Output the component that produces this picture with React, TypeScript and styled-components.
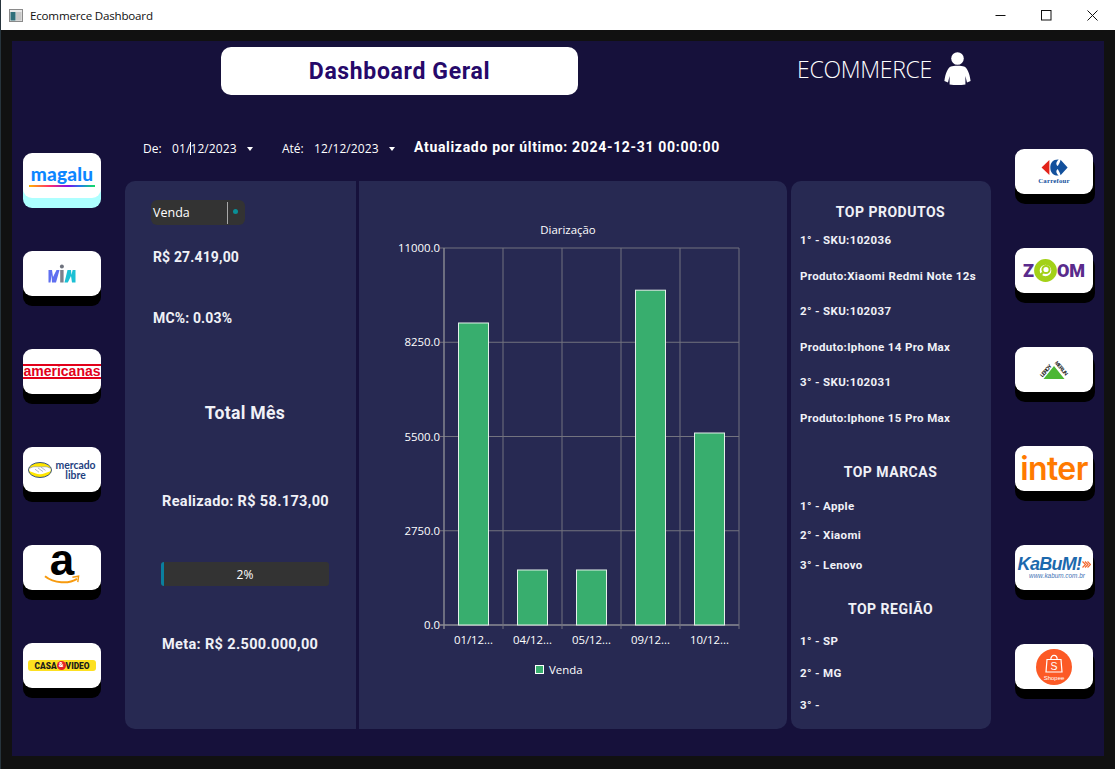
import React from 'react'
import styled, {createGlobalStyle} from 'styled-components'

const din = `Roboto, "Noto Sans", sans-serif`
const segoe = `"Open Sans", "Noto Sans", sans-serif`

const GlobalStyle = createGlobalStyle`
  html, body {
    margin: 0;
    padding: 0;
    background: #111111;
    overflow: hidden;
  }
`

const chartData = [
    {label: '01/12...', value: 8812},
    {label: '04/12...', value: 1605},
    {label: '05/12...', value: 1605},
    {label: '09/12...', value: 9769},
    {label: '10/12...', value: 5602},
]
const yTicks = [0, 2750, 5500, 8250, 11000]

const products = [
    '1° - SKU:102036', 'Produto:Xiaomi Redmi Note 12s',
    '2° - SKU:102037', 'Produto:Iphone 14 Pro Max',
    '3° - SKU:102031', 'Produto:Iphone 15 Pro Max',
]
const brands = ['1° - Apple', '2° - Xiaomi', '3° - Lenovo']
const regions = ['1° - SP', '2° - MG', '3° -']

function AppIcon() {
    return (
        <svg width="14" height="13" viewBox="0 0 14 13">
            <rect x="0.5" y="0.5" width="13" height="12" fill="#e8e8e8" stroke="#8a8a8a"/>
            <rect x="1.5" y="3" width="5" height="8.5" fill="#2f6f7a"/>
            <rect x="7" y="3" width="5.5" height="8.5" fill="#c8c8c8"/>
        </svg>
    )
}

function PersonIcon() {
    return (
        <svg width="27" height="33" viewBox="0 0 27 33">
            <circle cx="13.5" cy="6.5" r="6.3" fill="#fff"/>
            <path d="M7 14.5 C9 13.6 18 13.6 20 14.5 C23 15.6 25.6 21 26.6 29 L23 30.5 L21.4 24 L21.4 32.4 C16 33.2 11 33.2 5.6 32.4 L5.6 24 L4 30.5 L0.4 29 C1.4 21 4 15.6 7 14.5 Z" fill="#fff"/>
        </svg>
    )
}

function VinLogo() {
    return (
        <svg width="28" height="20" viewBox="0 0 28 20">
            <path d="M0.5 6 H4 L5 13 L8.5 6 H11.5 L8 18.5 H4 L3.6 11 L2.5 18.5 H0.5 Z" fill="#5f6ff0"/>
            <rect x="12.2" y="6" width="3.4" height="12.5" fill="#7c808c"/>
            <circle cx="13.9" cy="2.4" r="2" fill="#6e727e"/>
            <path d="M19.5 6 H23 L23.5 11 L24.6 6 H27.5 V18.5 H24 L23 12 L19.8 18.5 H16.5 Z" fill="#1cc0d4"/>
        </svg>
    )
}

function MercadoMark() {
    return (
        <svg width="24" height="16" viewBox="0 0 24 16">
            <ellipse cx="12" cy="8" rx="11.5" ry="7.5" fill="#ffe600" stroke="#1f3f86" strokeWidth="0.9"/>
            <path d="M1.2 6.6 C6 3.6 8.5 5.2 12 4.8 C15.5 5.2 18 3.6 22.8 6.6 L22.4 9.2 C18 10.6 14 12.6 12 12.2 C10 12.6 6 10.6 1.6 9.2 Z" fill="#fff"/>
            <path d="M7 7.2 L11 10.2 M10 6 L15 9.6 M13 5.2 L17.5 8.4 M1.2 6.6 C6 3.6 8.5 5.2 12 4.8 C15.5 5.2 18 3.6 22.8 6.6" stroke="#7c8aa8" strokeWidth="0.6" fill="none"/>
        </svg>
    )
}

function AmazonSmile() {
    return (
        <svg width="36" height="10" viewBox="0 0 36 10">
            <path d="M1 1.2 C10 8.6 25 9 33 3.8" stroke="#f79a0e" strokeWidth="2" fill="none"/>
            <path d="M28.4 2.2 L34.6 1.2 L33.8 7.2" stroke="#f79a0e" strokeWidth="1.4" fill="none"/>
        </svg>
    )
}

function CarrefourMark() {
    return (
        <svg width="27" height="17" viewBox="0 0 29 23" preserveAspectRatio="none">
            <path d="M9 1.5 L0.6 11.5 L9 21.5 Z" fill="#e2231a"/>
            <path d="M19 0.6 C13 0.2 10 5 10 11.5 C10 18 13 23 19 22.4 C16.5 19.5 15.4 16 18 13.4 C19 16 20.6 18.4 21 22 L28.6 11.5 L21 1 C20.6 4.6 19 7 18 9.6 C15.4 7 16.5 3.5 19 0.6 Z" fill="#12509c"/>
        </svg>
    )
}

function ZoomMark() {
    return (
        <svg width="23" height="23" viewBox="0 0 23 23">
            <circle cx="11.5" cy="11.5" r="8.6" fill="#fff" stroke="#a3d117" strokeWidth="5.6"/>
            <circle cx="12" cy="10.5" r="3.6" fill="#fff" stroke="#a3d117" strokeWidth="2"/>
            <path d="M9 13.5 L5.5 17" stroke="#a3d117" strokeWidth="2.4"/>
        </svg>
    )
}

function LeroyMark() {
    return (
        <svg width="32" height="24" viewBox="-1 -3 32 24">
            <path d="M15 5 L25.5 18 H4.5 Z" fill="#4cb733"/>
            <text x="0" y="0" fontSize="5.4" fontWeight="700" fontFamily="Liberation Sans, sans-serif" fill="#111"
                  transform="translate(3.4 16.6) rotate(-50)" textLength="15">LEROY</text>
            <text x="0" y="0" fontSize="5.4" fontWeight="700" fontFamily="Liberation Sans, sans-serif" fill="#111"
                  transform="translate(15.6 2) rotate(50)" textLength="17">MERLIN</text>
        </svg>
    )
}

function ShopeeLogo() {
    return (
        <svg width="36" height="36" viewBox="0 0 36 36">
            <circle cx="18" cy="18" r="18" fill="#fc5a26"/>
            <path d="M11 10.5 H25 L26 23 H10 Z" fill="none" stroke="#fff" strokeWidth="1.2"/>
            <path d="M14.8 10.5 C14.8 5 21.2 5 21.2 10.5" fill="none" stroke="#fff" strokeWidth="1.2"/>
            <text x="18" y="20.8" textAnchor="middle" fontSize="10.5" fontFamily="Liberation Sans, sans-serif" fill="#fff">S</text>
            <text x="18" y="30.5" textAnchor="middle" fontSize="6" fontFamily="Liberation Sans, sans-serif" fill="#fff">Shopee</text>
        </svg>
    )
}

function KabumChevrons() {
    return (
        <svg width="9" height="7" viewBox="0 0 9 7">
            <path d="M0.5 0.5 L3.5 3.5 L0.5 6.5 M3 0.5 L6 3.5 L3 6.5 M5.5 0.5 L8.5 3.5 L5.5 6.5" stroke="#f2692f" strokeWidth="1.2" fill="none"/>
        </svg>
    )
}

function Chart() {
    const left = 85
    const top = 67
    const width = 295
    const height = 377
    const max = 11000
    const step = width / chartData.length
    return (
        <svg width="428" height="548" viewBox="0 0 428 548">
            <text x="209" y="53" textAnchor="middle" fontSize="11.4" fontFamily={segoe} fill="#fff">Diarização</text>

            {yTicks.map(t => {
                const y = top + height - (t / max) * height
                return (
                    <g key={t}>
                        <line x1={left - 4} x2={left + width} y1={y} y2={y}
                              stroke={t === 0 ? '#8c8c94' : '#73737f'} strokeWidth={t === 0 ? 1.4 : 1}/>
                        <text x={left - 4} y={y + 4} textAnchor="end" fontSize="11.4" fontFamily={segoe} fill="#fff">
                            {t.toFixed(1)}
                        </text>
                    </g>
                )
            })}

            {[0, 1, 2, 3, 4, 5].map(i => (
                <line key={i} x1={left + i * step} x2={left + i * step} y1={top} y2={top + height + 4}
                      stroke={i === 0 ? '#8c8c94' : '#73737f'} strokeWidth={i === 0 ? 1.4 : 1}/>
            ))}

            {chartData.map((d, i) => {
                const h = (d.value / max) * height
                return (
                    <g key={d.label}>
                        <rect x={left + i * step + 14.5} y={top + height - h} width="30" height={h}
                              fill="#38ae6e" stroke="#e4f0ea" strokeWidth="1"/>
                        <text x={left + i * step + 29.5} y={top + height + 19} textAnchor="middle" fontSize="11.4"
                              fontFamily={segoe} fill="#fff">{d.label}</text>
                    </g>
                )
            })}

            <rect x="176.5" y="484.5" width="8" height="8" fill="#38ae6e" stroke="#fff" strokeWidth="1"/>
            <text x="190" y="493" fontSize="11.4" fontFamily={segoe} fill="#fff">Venda</text>
        </svg>
    )
}

function App() {
    const progress = 2
    return (
        <Page>
            <GlobalStyle/>
            <TitleBar>
                <AppIcon/>
                <WindowTitle>Ecommerce Dashboard</WindowTitle>
                <WindowButtons>
                    <svg width="11" height="11" viewBox="0 0 11 11"><path d="M0.5 5.5 H10.5" stroke="#111"/></svg>
                    <svg width="11" height="11" viewBox="0 0 11 11"><rect x="0.5" y="0.5" width="9.5" height="9.5" fill="none" stroke="#111"/></svg>
                    <svg width="11" height="11" viewBox="0 0 11 11"><path d="M0.5 0.5 L10.5 10.5 M10.5 0.5 L0.5 10.5" stroke="#111"/></svg>
                </WindowButtons>
            </TitleBar>

            <Frame>
                <Inner>
                    <Header>
                        <TitleCard>Dashboard Geral</TitleCard>
                        <Brand>
                            <BrandName>ECOMMERCE</BrandName>
                            <PersonIcon/>
                        </Brand>
                    </Header>

                    <MainGrid>
                        <LogoColumn $side="left">
                            <LogoButton $cyan>
                                <MagaluText>magalu</MagaluText>
                                <RainbowBar/>
                            </LogoButton>
                            <LogoButton><VinLogo/></LogoButton>
                            <LogoButton><AmericanasText>americanas</AmericanasText></LogoButton>
                            <LogoButton $row>
                                <MercadoMark/>
                                <MercadoText>mercado<br/>libre</MercadoText>
                            </LogoButton>
                            <LogoButton>
                                <AmazonText>a</AmazonText>
                                <AmazonSmile/>
                            </LogoButton>
                            <LogoButton><CasaBadge>CASA<CasaAmp>&amp;</CasaAmp>VIDEO</CasaBadge></LogoButton>
                        </LogoColumn>

                        <Center>
                            <DateRow>
                                <DateLabel>De:</DateLabel>
                                <DateValue>01/<TextCursor/>12/2023</DateValue>
                                <Caret/>
                                <DateLabel $gap>Até:</DateLabel>
                                <DateValue>12/12/2023</DateValue>
                                <Caret/>
                                <Updated>Atualizado por último: 2024-12-31 00:00:00</Updated>
                            </DateRow>

                            <Panels>
                                <MainPanel>
                                    <SummaryColumn>
                                        <Dropdown>
                                            <DropdownText>Venda</DropdownText>
                                            <DropdownDivider/>
                                            <DropdownDot/>
                                        </Dropdown>
                                        <Metric $top={22}>R$ 27.419,00</Metric>
                                        <Metric $top={41}>MC%: 0.03%</Metric>
                                        <MonthTitle>Total Mês</MonthTitle>
                                        <Metric $top={67} $indent={10} $large>Realizado: R$ 58.173,00</Metric>
                                        <ProgressBar>
                                            <ProgressChunk style={{width: `${progress}%`}}/>
                                            <ProgressLabel>{progress}%</ProgressLabel>
                                        </ProgressBar>
                                        <Metric $top={49} $indent={10} $large>Meta: R$ 2.500.000,00</Metric>
                                    </SummaryColumn>
                                    <ChartColumn><Chart/></ChartColumn>
                                </MainPanel>

                                <SidePanel>
                                    <SideTitle>TOP PRODUTOS</SideTitle>
                                    <SideList $gap={17.6} $top={8}>
                                        {products.map(p => <SideItem key={p}>{p}</SideItem>)}
                                    </SideList>
                                    <SideTitle $top={34}>TOP MARCAS</SideTitle>
                                    <SideList $gap={11.5} $top={14}>
                                        {brands.map(p => <SideItem key={p}>{p}</SideItem>)}
                                    </SideList>
                                    <SideTitle $top={24}>TOP REGIÃO</SideTitle>
                                    <SideList $gap={14} $top={12}>
                                        {regions.map(p => <SideItem key={p}>{p}</SideItem>)}
                                    </SideList>
                                </SidePanel>
                            </Panels>
                        </Center>

                        <LogoColumn $side="right">
                            <LogoButton $wide>
                                <CarrefourMark/>
                                <CarrefourText>Carrefour</CarrefourText>
                            </LogoButton>
                            <LogoButton $wide $row>
                                <ZoomText>Z</ZoomText><ZoomMark/><ZoomText>OM</ZoomText>
                            </LogoButton>
                            <LogoButton $wide><LeroyMark/></LogoButton>
                            <LogoButton $wide><InterText>inter</InterText></LogoButton>
                            <LogoButton $wide>
                                <KabumRow>
                                    <KabumText>KaBuM!</KabumText>
                                    <KabumChevrons/>
                                </KabumRow>
                                <KabumUrl>www.kabum.com.br</KabumUrl>
                            </LogoButton>
                            <LogoButton $wide><ShopeeLogo/></LogoButton>
                        </LogoColumn>
                    </MainGrid>
                </Inner>
            </Frame>
        </Page>
    )
}

const Page = styled.div`
  width: 1115px;
  height: 769px;
  box-sizing: border-box;
  border-left: 1px solid #27343c;
  display: flex;
  flex-direction: column;
  overflow: hidden;
`

const TitleBar = styled.div`
  height: 30px;
  flex: none;
  background: #fff;
  display: flex;
  align-items: center;
  padding-left: 8px;
`

const WindowTitle = styled.span`
  margin-left: 7px;
  font: 400 11.6px ${segoe};
  letter-spacing: -0.2px;
  color: #111;
`

const WindowButtons = styled.div`
  margin-left: auto;
  margin-right: 17px;
  display: flex;
  gap: 35px;
`

const Frame = styled.div`
  flex: 1;
  min-height: 0;
  background: #111111;
  padding: 11px 11px 13px 11px;
  display: flex;
`

const Inner = styled.div`
  flex: 1;
  background: #16113b;
  padding-top: 6px;
  display: flex;
  flex-direction: column;
`

const Header = styled.div`
  height: 48px;
  display: flex;
  align-items: flex-start;
  padding-left: 209px;
`

const TitleCard = styled.div`
  width: 357px;
  height: 48px;
  background: #fff;
  border-radius: 10px;
  display: flex;
  align-items: center;
  justify-content: center;
  font: 700 23px ${din};
  letter-spacing: 0.65px;
  color: #26096a;
`

const Brand = styled.div`
  margin-left: 219px;
  display: flex;
  align-items: center;
  gap: 12px;
  margin-top: 5px;
`

const BrandName = styled.span`
  font: 300 23px ${segoe};
  letter-spacing: -0.3px;
  color: #fff;
`

const MainGrid = styled.div`
  margin-top: 43px;
  display: grid;
  grid-template-columns: 113px 866px 1fr;
`

const LogoColumn = styled.div<{$side: 'left' | 'right'}>`
  display: flex;
  flex-direction: column;
  gap: ${p => (p.$side === 'left' ? 53 : 54)}px;
  padding-top: ${p => (p.$side === 'left' ? 15 : 11)}px;
  padding-left: ${p => (p.$side === 'left' ? 11 : 24)}px;
`

const LogoButton = styled.div<{$cyan?: boolean; $wide?: boolean; $row?: boolean}>`
  width: 78px;
  height: 45px;
  flex: none;
  background: #fff;
  border-radius: 9px;
  box-shadow: ${p => (p.$wide ? '1px 9px 0 1px #000' : p.$cyan ? '0 10px 0 #adffff' : '0 10px 0 #000')};
  display: flex;
  flex-direction: ${p => (p.$row ? 'row' : 'column')};
  align-items: center;
  justify-content: center;
`

const MagaluText = styled.span`
  font: 900 19px/19px Lato, sans-serif;
  letter-spacing: 0.2px;
  color: #0d86ff;
`

const RainbowBar = styled.div`
  width: 66px;
  height: 2px;
  margin-top: 2px;
  background: linear-gradient(90deg, #ffb400, #ff2a6d 32%, #7a12e8 60%, #1f7ee8 78%, #12e060);
`

const AmericanasText = styled.div`
  width: 78px;
  box-sizing: border-box;
  border-top: 2px solid #e2001a;
  border-bottom: 2px solid #e2001a;
  margin-bottom: 1px;
  text-align: center;
  font: 700 14px/11px "Liberation Sans", sans-serif;
  color: #e2001a;
  white-space: nowrap;
  overflow: hidden;
`

const MercadoText = styled.span`
  margin-left: 3px;
  font: 700 10.4px/10px Lato, sans-serif;
  color: #1f3f7f;
  text-align: center;
`

const AmazonText = styled.span`
  height: 27px;
  font: 700 44px/24px "Liberation Sans", sans-serif;
  color: #000;
  margin-top: -2px;
`

const CasaBadge = styled.div`
  width: 68px;
  height: 11px;
  background: #fde021;
  border-radius: 3px;
  display: flex;
  align-items: center;
  justify-content: center;
  font: 900 8.4px Roboto, sans-serif;
  color: #1a1a1a;
  white-space: nowrap;
`

const CasaAmp = styled.span`
  display: inline-block;
  width: 9px;
  height: 9px;
  line-height: 9px;
  text-align: center;
  border-radius: 50%;
  background: #e5242a;
  color: #fff;
  font-size: 7px;
`

const CarrefourText = styled.span`
  font: 700 6.8px/7px "Liberation Serif", serif;
  letter-spacing: 0.2px;
  color: #12509c;
  margin-top: 1px;
`

const ZoomText = styled.span`
  font: 900 18px/18px Roboto, sans-serif;
  color: #5a2b8c;
`

const InterText = styled.span`
  font: 600 32px/33px Inter, sans-serif;
  letter-spacing: -0.6px;
  color: #ff7a00;
`

const KabumRow = styled.div`
  display: flex;
  align-items: center;
  gap: 1px;
  margin-left: 1px;
`

const KabumText = styled.span`
  font: italic 700 18px/17px "Liberation Sans", sans-serif;
  letter-spacing: -0.7px;
  color: #1c69ad;
`

const KabumUrl = styled.span`
  font: italic 400 6.4px/6px "Liberation Sans", sans-serif;
  color: #3f73b5;
  margin-left: 6px;
`

const Center = styled.div`
  display: flex;
  flex-direction: column;
`

const DateRow = styled.div`
  height: 43px;
  display: flex;
  align-items: flex-start;
  padding-left: 18px;
  padding-top: 2px;
  box-sizing: border-box;
  color: #fff;
`

const DateLabel = styled.span<{$gap?: boolean}>`
  width: ${p => (p.$gap ? 32 : 29)}px;
  margin-left: ${p => (p.$gap ? 29 : 0)}px;
  font: 400 12px/18px ${segoe};
`

const DateValue = styled.span`
  width: 67px;
  font: 400 12px/18px ${segoe};
  letter-spacing: 0.1px;
  white-space: nowrap;
`

const TextCursor = styled.span`
  display: inline-block;
  width: 1px;
  height: 13px;
  margin-right: -1px;
  vertical-align: -2px;
  background: #fff;
`

const Caret = styled.span`
  width: 0;
  height: 0;
  margin: 7px 0 0 8px;
  border-left: 3.5px solid transparent;
  border-right: 3.5px solid transparent;
  border-top: 4px solid #fff;
`

const Updated = styled.span`
  margin-left: 19px;
  margin-top: -2px;
  font: 700 14px/18px ${din};
  letter-spacing: 0.68px;
`

const Panels = styled.div`
  height: 548px;
  display: grid;
  grid-template-columns: 662px 200px;
  gap: 4px;
`

const MainPanel = styled.div`
  background: #272952;
  border-radius: 10px;
  display: grid;
  grid-template-columns: 231px 3px 1fr;
  overflow: hidden;

  &::before {
    content: "";
    grid-column: 2;
    grid-row: 1;
    background: #16113b;
  }
`

const SummaryColumn = styled.div`
  grid-column: 1;
  grid-row: 1;
  padding: 19px 0 0 26px;
  display: flex;
  flex-direction: column;
  align-items: flex-start;
`

const ChartColumn = styled.div`
  grid-column: 3;
  grid-row: 1;
`

const Dropdown = styled.div`
  width: 94px;
  height: 25px;
  background: #333333;
  border-radius: 6px;
  display: flex;
  align-items: center;
  padding-left: 2px;
  box-sizing: border-box;
`

const DropdownText = styled.span`
  width: 74px;
  font: 400 12.5px ${segoe};
  color: #fff;
`

const DropdownDivider = styled.div`
  width: 1px;
  height: 22px;
  background: #a8a8a8;
`

const DropdownDot = styled.div`
  width: 5px;
  height: 5px;
  margin-left: 5px;
  margin-bottom: 2px;
  border-radius: 50%;
  background: #0a8f96;
`

const Metric = styled.div<{$top: number; $indent?: number; $large?: boolean}>`
  margin-top: ${p => p.$top}px;
  margin-left: ${p => (p.$indent ? p.$indent + 1 : 2)}px;
  font: 700 ${p => (p.$large ? 14.5 : 14)}px/20px ${din};
  letter-spacing: ${p => (p.$large ? 0.35 : 0.15)}px;
  color: #f0f1f7;
  white-space: nowrap;
`

const MonthTitle = styled.div`
  width: 188px;
  margin-top: 73px;
  text-align: center;
  font: 700 17.6px/24px ${din};
  letter-spacing: 0.3px;
  color: #f0f1f7;
`

const ProgressBar = styled.div`
  position: relative;
  width: 168px;
  height: 24px;
  margin: 50px 0 0 10px;
  background: #333333;
  border-radius: 3px;
  overflow: hidden;
`

const ProgressChunk = styled.div`
  height: 100%;
  background: #0a7f9e;
`

const ProgressLabel = styled.span`
  position: absolute;
  inset: 0;
  display: flex;
  align-items: center;
  justify-content: center;
  font: 400 12px ${segoe};
  color: #fff;
`

const SidePanel = styled.div`
  background: #272952;
  border-radius: 10px;
  padding: 20px 0 0 9px;
  box-sizing: border-box;
  display: flex;
  flex-direction: column;
`

const SideTitle = styled.div<{$top?: number}>`
  margin: ${p => p.$top ?? 0}px 0 0 -10px;
  height: 22px;
  text-align: center;
  font: 700 14px/22px ${din};
  letter-spacing: 0.5px;
  color: #f0f1f7;
`

const SideList = styled.div<{$gap: number; $top: number}>`
  margin-top: ${p => p.$top}px;
  display: flex;
  flex-direction: column;
  gap: ${p => p.$gap}px;
`

const SideItem = styled.div`
  font: 700 11.5px/18px ${din};
  letter-spacing: 0.35px;
  color: #f0f1f7;
  white-space: nowrap;
`

export default App
